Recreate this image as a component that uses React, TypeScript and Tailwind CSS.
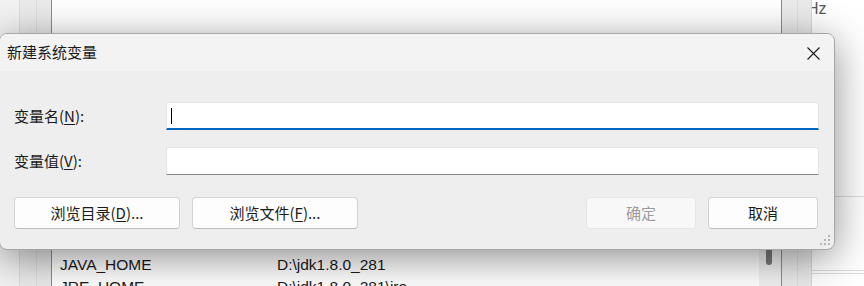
// New system variable dialog over the Environment Variables window

const cjk = "font-['Microsoft_YaHei_UI','Noto_Sans_CJK_SC',sans-serif]";
const latin = "font-['Liberation_Sans','Noto_Sans',sans-serif]";

function Key({ k }: { k: string }) {
  return <span className="underline underline-offset-2">{k}</span>;
}

function DialogButton({
  children,
  disabled,
  wide,
}: {
  children: React.ReactNode;
  disabled?: boolean;
  wide?: boolean;
}) {
  return (
    <button
      className={
        (wide ? "w-[166px] " : "w-[110px] ") +
        (disabled
          ? "border-[#e6e6e6] bg-[#f8f8f8] text-[#9b9b9b] "
          : "border-[#d3d3d3] border-b-[#bdbdbd] bg-[#fdfdfd] text-[#1b1b1b] ") +
        "flex h-[32px] items-center justify-center rounded-[4px] border text-[15px]"
      }
    >
      {children}
    </button>
  );
}

function ParentWindow() {
  return (
    <div className={`flex h-full w-full bg-[#f0f0f0] ${latin}`}>
      <div className="w-[20px] border-r border-[#dcdcdc] bg-[#f3f3f3]" />
      <div className="flex w-[32px] border-r border-[#8c8c8c]">
        <div className="w-[17px] border-r border-[#dedede] bg-[#ebebeb]" />
        <div className="flex-1 bg-[#ebebeb]" />
      </div>

      {/* list views (user / system variables) */}
      <div className="flex w-[729px] flex-col justify-between">
        <div className="h-[44px] bg-white" />
        <div className="flex h-[38px] bg-white">
          <div className="flex flex-1 flex-col pt-[6px] pl-[8px] text-[15.5px] text-[#1a1a1a]">
            <div className="flex h-[22px] items-center">
              <span className="w-[217px]">JAVA_HOME</span>
              <span>D:\jdk1.8.0_281</span>
            </div>
            <div className="flex h-[22px] items-center">
              <span className="w-[217px]">JRE_HOME</span>
              <span>D:\jdk1.8.0_281\jre</span>
            </div>
          </div>
          <div className="flex w-[22px] justify-center bg-[#f2f2f2]">
            <div className="mr-[3px] h-[17px] w-[6px] rounded-[3px] bg-[#7a7a7a]" />
          </div>
        </div>
      </div>

      <div className="flex w-[31px] border-l border-[#8c8c8c]">
        <div className="w-[16px] border-r border-[#dedede] bg-[#ebebeb]" />
        <div className="flex-1 border-r border-[#d6d6d6] bg-[#ebebeb]" />
      </div>

      {/* right-hand panel, mostly hidden */}
      <div className="flex flex-1 flex-col overflow-hidden bg-white">
        <div className="-ml-[5px] text-[16px] leading-[18px] text-[#5a5a5a]">Hz</div>
        <div className="mt-[178px] h-[1px] bg-[#dcdcdc]" />
        <div className="mt-[73px] h-[4px] border-y border-[#dcdcdc]" />
      </div>
    </div>
  );
}

function NewVariableDialog() {
  return (
    <div
      className={`absolute top-[33px] left-[-1px] flex h-[217px] w-[836px] flex-col overflow-hidden rounded-[8px] border border-[#a6a6a6] bg-[#eeeeee] text-[#1a1a1a] shadow-[0_8px_40px_rgba(0,0,0,0.45)] ${cjk}`}
    >
      {/* title bar */}
      <div className="flex h-[37px] items-center justify-between bg-[#f3f3f3] pl-[7px] pr-[14px]">
        <span className="text-[15px]">新建系统变量</span>
        <svg width="13" height="13" viewBox="0 0 13 13" className="mt-[1px]">
          <path d="M0.5 0.5 L12.5 12.5 M12.5 0.5 L0.5 12.5" stroke="#1a1a1a" strokeWidth="1.1" fill="none" />
        </svg>
      </div>

      {/* form */}
      <div className="flex flex-1 flex-col pt-[31px] pl-[14px] pr-[15px]">
        <div className="grid grid-cols-[152px_1fr] items-center gap-y-[17px] text-[15px]">
          <span>
            变量名(<Key k="N" />):
          </span>
          <div className="flex h-[28px] items-center rounded-t-[3px] border border-b-2 border-[#e4e4e4] border-b-[#0067c0] bg-white pl-[4px]">
            <div className="h-[16px] w-[1px] bg-black" />
          </div>

          <span>
            变量值(<Key k="V" />):
          </span>
          <div className="h-[28px] rounded-t-[3px] border border-[#e4e4e4] border-b-[#868686] bg-white" />
        </div>

        <div className="mt-[22px] flex items-center justify-between pr-[1px]">
          <div className="flex gap-[12px]">
            <DialogButton wide>
              浏览目录(<Key k="D" />)...
            </DialogButton>
            <DialogButton wide>
              浏览文件(<Key k="F" />)...
            </DialogButton>
          </div>
          <div className="flex gap-[12px]">
            <DialogButton disabled>确定</DialogButton>
            <DialogButton>取消</DialogButton>
          </div>
        </div>
      </div>

      {/* resize grip */}
      <svg width="11" height="11" viewBox="0 0 11 11" className="absolute right-[3px] bottom-[3px]">
        <g fill="#b5b5b5">
          <rect x="8" y="0" width="2" height="2" />
          <rect x="4" y="4" width="2" height="2" />
          <rect x="8" y="4" width="2" height="2" />
          <rect x="0" y="8" width="2" height="2" />
          <rect x="4" y="8" width="2" height="2" />
          <rect x="8" y="8" width="2" height="2" />
        </g>
      </svg>
    </div>
  );
}

export default function App() {
  return (
    <div className="relative h-[286px] w-[864px] overflow-hidden">
      <ParentWindow />
      <NewVariableDialog />
    </div>
  );
}
